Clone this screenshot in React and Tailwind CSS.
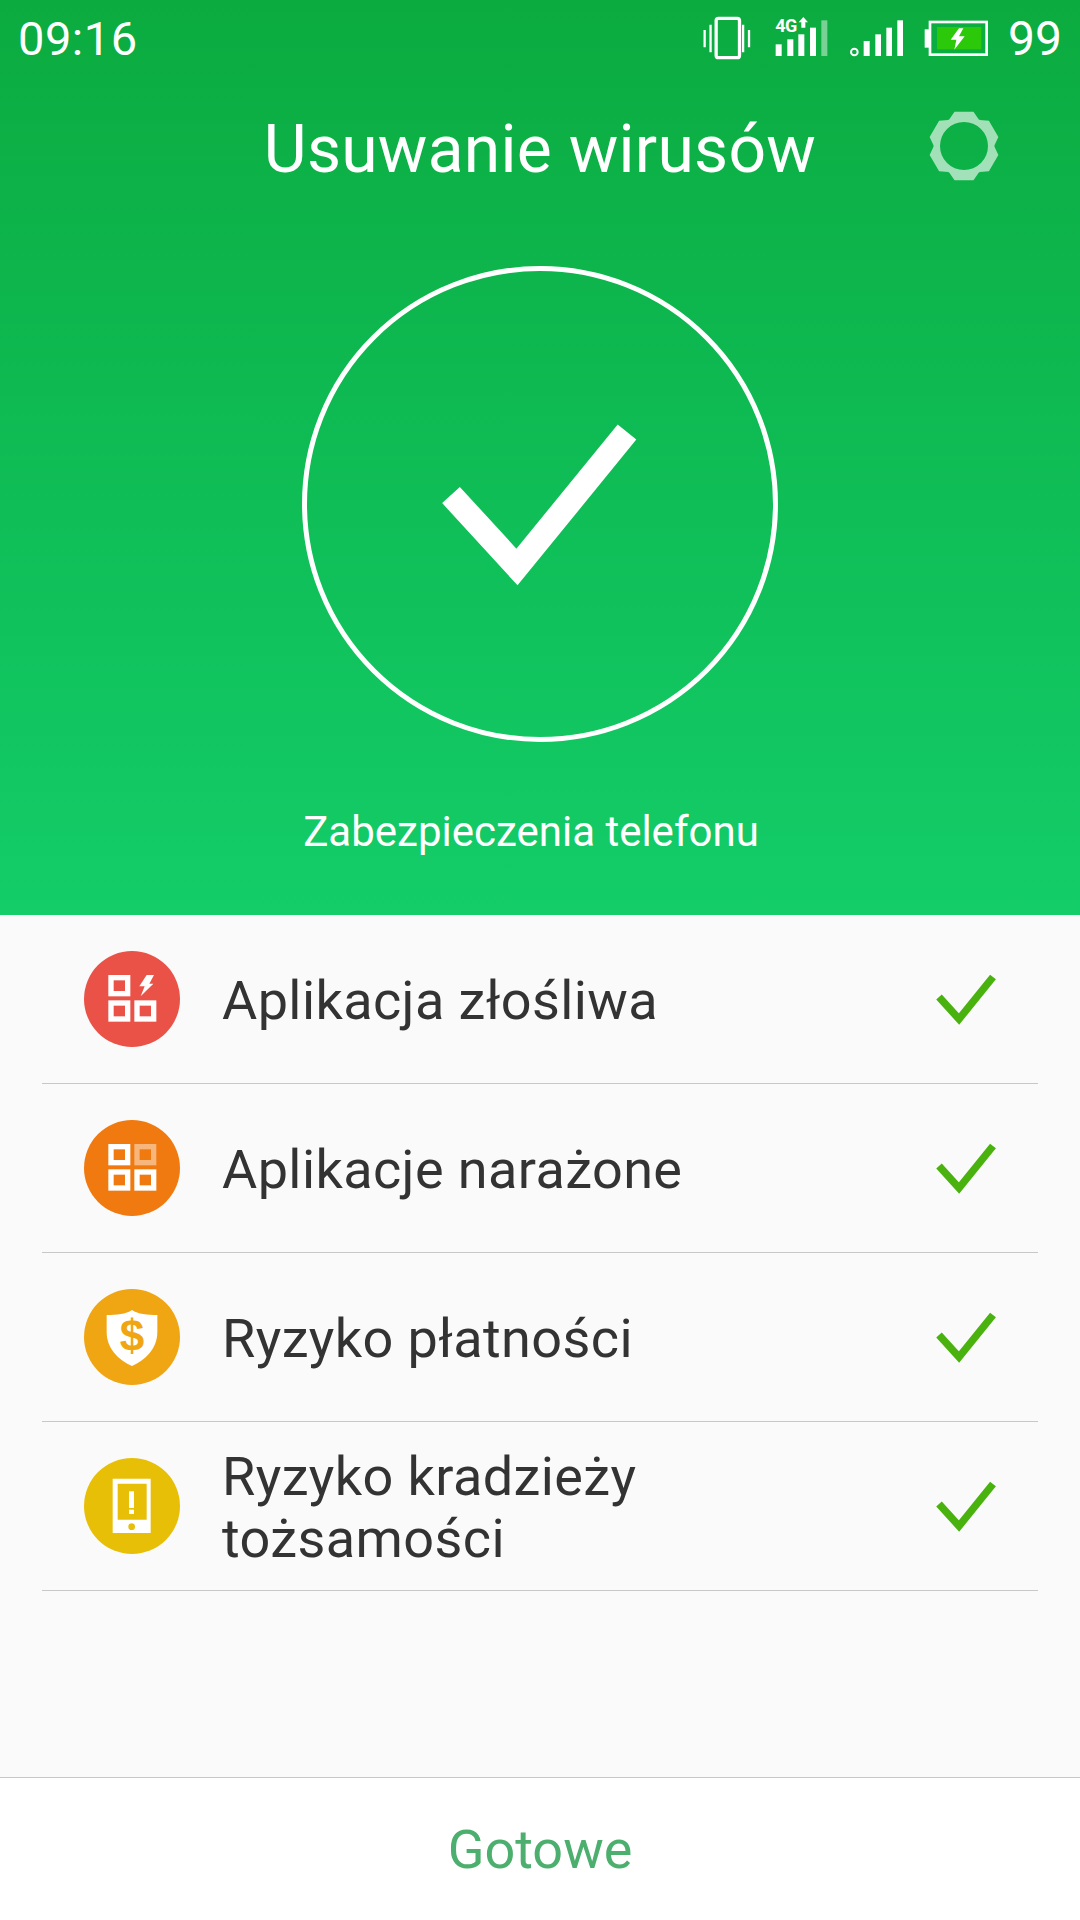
import React from 'react';

const gearPath = () => {
  const pts = [];
  for (let i = 0; i < 6; i++) {
    const a = (Math.PI / 3) * i - Math.PI / 2;
    const at = (r, d) => `${(36 + r * Math.cos(a + d)).toFixed(2)} ${(36 + r * Math.sin(a + d)).toFixed(2)}`;
    pts.push(at(30.5, -0.5), at(35.5, -0.27), at(35.5, 0.27), at(30.5, 0.5));
  }
  return `M${pts.join('L')}Z M60 36A24 24 0 1 0 12 36A24 24 0 1 0 60 36Z`;
};

const Vibrate = () => (
  <svg width="48" height="48" viewBox="68 40 146 144" fill="none" stroke="white">
    <rect x="108" y="52" width="71" height="120" rx="7" strokeWidth="10" />
    <path d="M73 88V140M91 72V155M190 72V155M208 88V140" strokeWidth="7" />
  </svg>
);

const Net4G = () => (
  <svg width="54" height="44" viewBox="283 45 162 132" fill="white">
    <text x="284" y="94" fontFamily="Roboto, sans-serif" fontWeight="700" fontSize="54" textLength="66">4G</text>
    <path d="M368 48L382 64H374V80H362V64H354Z" />
    <rect x="285" y="130" width="18" height="35" />
    <rect x="320" y="115" width="18" height="50" />
    <rect x="353" y="100" width="18" height="65" />
    <rect x="388" y="80" width="18" height="85" />
    <rect x="422" y="58" width="18" height="107" opacity="0.45" />
  </svg>
);

const Signal = () => (
  <svg width="56" height="44" viewBox="508 45 168 132" fill="white">
    <circle cx="524" cy="153" r="10" fill="none" stroke="white" strokeWidth="6" />
    <rect x="552" y="120" width="18" height="45" />
    <rect x="587" y="100" width="17" height="65" />
    <rect x="620" y="80" width="17" height="85" />
    <rect x="653" y="58" width="17" height="107" />
  </svg>
);

const Battery = () => (
  <svg width="64" height="44" viewBox="733 45 192 132">
    <rect x="735" y="85" width="13" height="55" fill="white" />
    <rect x="751" y="63" width="170" height="98" fill="none" stroke="white" strokeWidth="8" />
    <rect x="772" y="78" width="133" height="67" fill="#2bc90a" />
    <path d="M838 82L813 116H830L824 146L855 106H838L851 82Z" fill="white" />
  </svg>
);

const AppIcon = ({ bg, children }) => (
  <div className="w-[96px] h-[96px] shrink-0 rounded-full" style={{ backgroundColor: bg }}>
    <svg width="96" height="96" viewBox="0 0 288 288">{children}</svg>
  </div>
);

const Sq = ({ x, y, opacity }) => (
  <rect x={x + 8} y={y + 8} width="50" height="48" fill="none" stroke="white" strokeWidth="16" opacity={opacity} />
);

const rows = [
  {
    label: 'Aplikacja złośliwa',
    icon: (
      <AppIcon bg="#ea5248">
        <Sq x={73} y={72} />
        <Sq x={73} y={148} />
        <Sq x={151} y={148} />
        <path d="M188 72H210L196 98H208L170 136L182 106H166Z" fill="white" />
      </AppIcon>
    ),
  },
  {
    label: 'Aplikacje narażone',
    icon: (
      <AppIcon bg="#f07a10">
        <Sq x={73} y={72} />
        <Sq x={151} y={72} opacity={0.45} />
        <Sq x={73} y={148} />
        <Sq x={151} y={148} />
      </AppIcon>
    ),
  },
  {
    label: 'Ryzyko płatności',
    icon: (
      <AppIcon bg="#f0a513">
        <path d="M144 63C126 76 98 78 68 78V130C68 178 104 214 144 231C184 214 220 178 220 130V78C190 78 162 76 144 63Z" fill="white" />
        <text x="144" y="186" textAnchor="middle" fontFamily="'Liberation Sans', sans-serif" fontWeight="700" fontSize="132" fill="#f0a513">$</text>
      </AppIcon>
    ),
  },
  {
    label: 'Ryzyko kradzieży tożsamości',
    icon: (
      <AppIcon bg="#e8bf07">
        <path fillRule="evenodd" d="M86 62H200V225H86ZM101 77V185H188V77Z" fill="white" />
        <circle cx="143" cy="206" r="10" fill="#e8bf07" />
        <rect x="135" y="100" width="15" height="50" fill="white" />
        <rect x="135" y="155" width="15" height="13" fill="white" />
      </AppIcon>
    ),
  },
];

const App = () => {
  return (
    <div className="w-[1080px] h-[1920px] flex flex-col bg-[#fafafa] overflow-hidden" style={{ fontFamily: 'Roboto, sans-serif' }}>
      <div className="h-[915px] shrink-0 flex flex-col bg-gradient-to-b from-[#0bab3f] to-[#13cd69] text-white">
        <div className="h-[76px] flex items-center justify-between pl-[18px] pr-[18px]">
          <span className="text-[47px] leading-none tracking-[0.5px]">09:16</span>
          <div className="flex items-center">
            <Vibrate />
            <div className="w-[24px]" />
            <Net4G />
            <div className="w-[20px]" />
            <Signal />
            <div className="w-[19px]" />
            <Battery />
            <span className="ml-[20px] text-[48px] leading-none relative top-[1px]">99</span>
          </div>
        </div>

        <div className="relative h-[148px] flex items-center justify-center">
          <h1 className="text-[66px] leading-none font-normal tracking-[0.25px]">Usuwanie wirusów</h1>
          <svg className="absolute left-[892px] top-[-2px]" width="144" height="144" viewBox="-36 -36 144 144">
            <path d={gearPath()} fill="white" fillOpacity="0.62" fillRule="evenodd" />
          </svg>
        </div>

        <div className="mt-[42px] mx-auto w-[476px] h-[476px] rounded-full border-[5px] border-white flex items-center justify-center">
          <svg width="474" height="474" viewBox="0 0 474 474" className="shrink-0">
            <path d="M148 228L214 300L324 165" fill="none" stroke="white" strokeWidth="24" />
          </svg>
        </div>

        <p className="mt-[66px] text-center text-[42px] leading-[48px] pr-[18px]">Zabezpieczenia telefonu</p>
      </div>

      <div className="flex-1 px-[42px]">
        {rows.map((row) => (
          <div key={row.label} className="h-[169px] flex items-center border-b border-[#c8c8c8] pl-[42px] pr-[42px]">
            {row.icon}
            <span className="ml-[42px] w-[520px] text-[54px] leading-[62px] tracking-[0.4px] text-[#333333] relative top-[2px]">{row.label}</span>
            <svg className="ml-auto" width="60" height="52" viewBox="0 0 60 52" fill="none">
              <path d="M3 24L23 46L57 4" stroke="#4ab20e" strokeWidth="7.5" />
            </svg>
          </div>
        ))}
      </div>

      <div className="h-[143px] shrink-0 flex items-center justify-center bg-white border-t border-[#c8c8c8]">
        <span className="text-[54px] leading-none text-[#4caf6e] relative top-[1px]">Gotowe</span>
      </div>
    </div>
  );
};

export default App;
